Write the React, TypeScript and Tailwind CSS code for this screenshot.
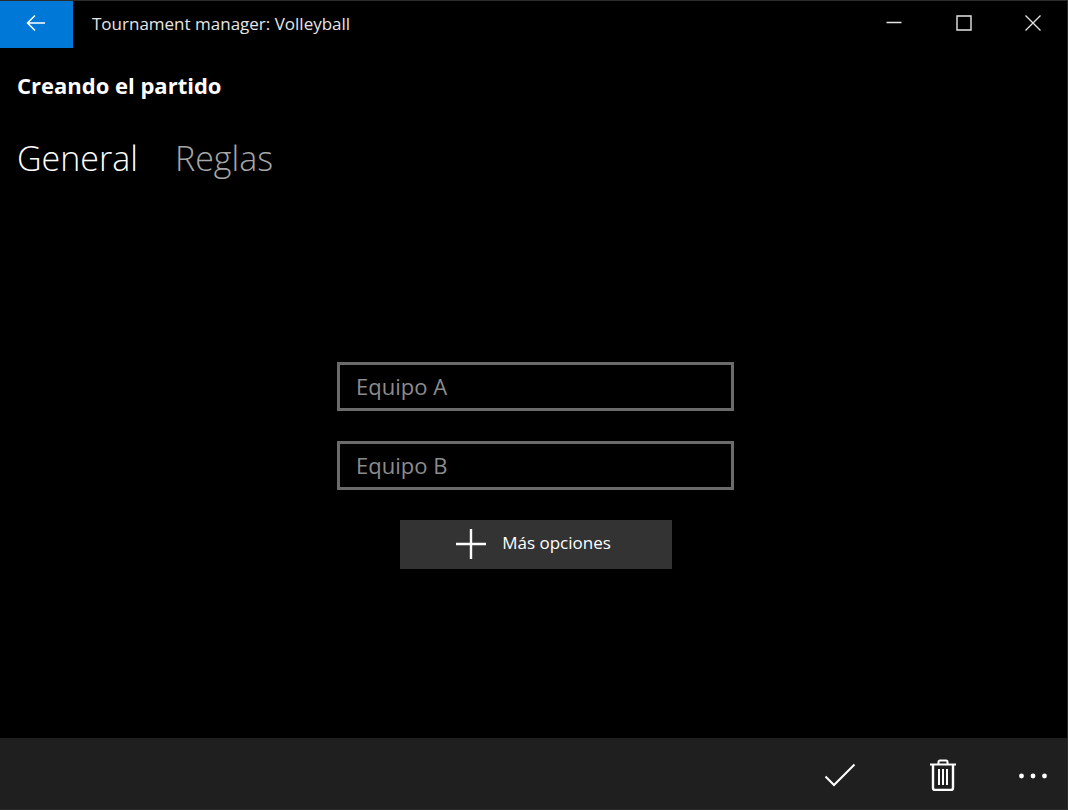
import { useState } from "react";

const tabs = ["General", "Reglas"];

function TitleBar() {
  return (
    <header className="flex h-[47px] items-stretch justify-between">
      <div className="flex items-stretch">
        <button aria-label="Atrás" className="flex w-[73px] items-center justify-center bg-[#0078d7] pr-0.5 pb-1">
          <svg width="20" height="18" viewBox="0 0 20 18" fill="none" stroke="currentColor" strokeWidth="1.5">
            <path d="M19 9H1.5M9 1.5L1.5 9L9 16.5" />
          </svg>
        </button>
        <span className="flex items-center pb-0.5 pl-[19px] text-[17px] text-[#e6e6e6]">Tournament manager: Volleyball</span>
      </div>
      <div className="flex text-[#e6e6e6]">
        <button aria-label="Minimizar" className="flex w-[70px] items-center justify-center pb-1">
          <svg width="16" height="16" viewBox="0 0 16 16" fill="none" stroke="currentColor" strokeWidth="1.5">
            <path d="M0.5 7.5H15.5" />
          </svg>
        </button>
        <button aria-label="Maximizar" className="flex w-[70px] items-center justify-center pb-1">
          <svg width="16" height="16" viewBox="0 0 16 16" fill="none" stroke="currentColor" strokeWidth="1.4">
            <path d="M1 1H15V15H1Z" />
          </svg>
        </button>
        <button aria-label="Cerrar" className="flex w-17 items-center justify-center pb-1">
          <svg width="16" height="16" viewBox="0 0 16 16" fill="none" stroke="currentColor" strokeWidth="1.3">
            <path d="M0.5 0.5L15.5 15.5M15.5 0.5L0.5 15.5" />
          </svg>
        </button>
      </div>
    </header>
  );
}

function CommandBar() {
  return (
    <footer className="flex h-[71px] items-stretch justify-end bg-[#1f1f1f]">
      <button aria-label="Aceptar" className="flex w-[103px] items-center justify-center pt-0.5">
        <svg width="32" height="24" viewBox="0 0 32 24" fill="none" stroke="currentColor" strokeWidth="2">
          <path d="M1.5 13.5L10 22L30.5 1.5" />
        </svg>
      </button>
      <button aria-label="Eliminar" className="mr-[5px] flex w-[103px] items-center justify-center pt-0.5">
        <svg width="26" height="32" viewBox="0 0 26 32" fill="none" stroke="currentColor" strokeWidth="2">
          <path d="M0 5.5H26" />
          <path d="M8.5 5V3Q8.5 1.5 10 1.5H16Q17.5 1.5 17.5 3V5" />
          <path d="M3 5.5V29Q3 31 5 31H21Q23 31 23 29V5.5" strokeWidth="2.4" />
          <path d="M9 10V26M13 10V26M17 10V26" />
        </svg>
      </button>
      <button aria-label="Más" className="flex w-17 items-center justify-center pt-1">
        <svg width="28" height="6" viewBox="0 0 28 6" fill="currentColor">
          <circle cx="2.5" cy="3" r="2.4" />
          <circle cx="14" cy="3" r="2.4" />
          <circle cx="25.5" cy="3" r="2.4" />
        </svg>
      </button>
    </footer>
  );
}

export default function App() {
  const [active, setActive] = useState("General");
  const [teamA, setTeamA] = useState("");
  const [teamB, setTeamB] = useState("");

  const inputStyle =
    "h-[49px] w-full border-3 border-[#6b6b6b] bg-black px-4 text-[22px] text-white outline-none placeholder:text-[#8c8c8c]";

  return (
    <div className="flex min-h-screen flex-col border-y border-r border-[#2b2b2b] bg-black font-['Open_Sans',sans-serif] text-white">
      <TitleBar />

      <h1 className="px-[17px] pt-[21px] text-[22px] leading-8 font-bold">Creando el partido</h1>
      <nav className="flex gap-[37px] px-[17px] pt-[31px] pb-2">
        {tabs.map((tab) => (
          <button
            key={tab}
            onClick={() => setActive(tab)}
            className={
              tab === active
                ? "text-[34px] leading-[52px] font-[350] text-white"
                : "text-[34px] leading-[52px] font-[350] text-[#a6a6a6]"
            }
          >
            {tab}
          </button>
        ))}
      </nav>

      <main className="flex flex-1 items-center justify-center pr-4 pl-5">
        <form className="flex w-full max-w-[397px] flex-col items-center" onSubmit={(e) => e.preventDefault()}>
          <input
            aria-label="Equipo A"
            placeholder="Equipo A"
            value={teamA}
            onChange={(e) => setTeamA(e.target.value)}
            className={inputStyle}
          />
          <input
            aria-label="Equipo B"
            placeholder="Equipo B"
            value={teamB}
            onChange={(e) => setTeamB(e.target.value)}
            className={inputStyle + " my-[30px]"}
          />
          <button className="flex h-[49px] w-[272px] items-center justify-center gap-4 bg-[#333333] pr-1 text-[17px]">
            <svg width="30" height="30" viewBox="0 0 30 30" fill="none" stroke="currentColor" strokeWidth="2.4">
              <path d="M15 0V30M0 15H30" />
            </svg>
            <span className="pb-0.5">Más opciones</span>
          </button>
        </form>
      </main>

      <CommandBar />
    </div>
  );
}
